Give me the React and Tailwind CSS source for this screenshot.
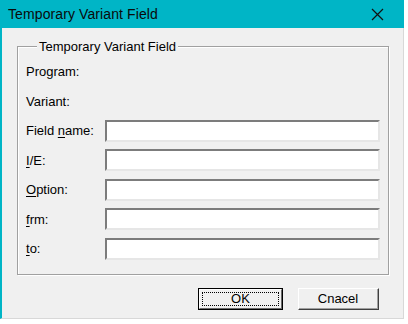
import React from "react";

const rows = [
  { pre: "Program:", input: false },
  { pre: "Variant:", input: false },
  { pre: "Field ", key: "n", post: "ame:", input: true },
  { pre: "", key: "I", post: "/E:", input: true },
  { pre: "", key: "O", post: "ption:", input: true },
  { pre: "", key: "f", post: "rm:", input: true },
  { pre: "", key: "t", post: "o:", input: true },
];

const Field = () => (
  <input
    type="text"
    className="h-[22px] w-[275px] bg-white border-2 border-t-[#7c7c7c] border-l-[#7c7c7c] border-b-[#e6e6e6] border-r-[#e6e6e6] outline-none"
  />
);

const App = () => {
  return (
    <div
      className="w-[408px] h-[324px] bg-white text-black text-[13px]"
      style={{ fontFamily: '"Liberation Sans", Arial, sans-serif' }}
    >
      <div className="w-[404px] h-[319px] flex flex-col border-l-2 border-[#00b5c6] border-r border-r-[#d8d8d8] border-b border-b-[#d8d8d8] bg-[#f0f0f0]">
        {/* title bar */}
        <div className="h-[28px] -ml-[2px] w-[404px] bg-[#00b5c6] flex items-center justify-between pl-[8px] pr-[20px]">
          <span className="text-[14px] leading-none tracking-[0.1px] text-[#0a0a0a]">Temporary Variant Field</span>
          <svg width="13" height="13" viewBox="0 0 13 13">
            <path d="M1 1 L12 12 M12 1 L1 12" stroke="#111" strokeWidth="1.2" fill="none" />
          </svg>
        </div>

        {/* group box */}
        <div className="mt-[18px] ml-[15px] w-[372px] border border-[#a0a0a0] shadow-[inset_1px_1px_0_#fff,1px_1px_0_#fff] pl-[8px] pr-[8px] pb-[10px]">
          <div className="-mt-[8px] ml-[11px] w-fit px-[2px] h-[15px] leading-[15px] bg-[#f0f0f0]">
            Temporary Variant Field
          </div>
          <div className="mt-[3px] flex flex-col">
            {rows.map((r, i) => (
              <div key={i} className="h-[29.5px] flex items-center">
                <div className="w-[79px] leading-[15px]">
                  {r.pre}
                  {r.key && <span className="underline underline-offset-2">{r.key}</span>}
                  {r.post}
                </div>
                {r.input && <Field />}
              </div>
            ))}
          </div>
        </div>

        {/* buttons */}
        <div className="mt-[13px] flex justify-end pr-[24px] gap-[15px]">
          <button className="w-[85px] h-[22px] border border-black bg-[#f0f0f0] p-0">
            <div className="h-full w-full border border-t-white border-l-white border-b-[#696969] border-r-[#696969] p-[2px]">
              <div className="h-full w-full border border-dotted border-black flex items-center justify-center leading-none">
                OK
              </div>
            </div>
          </button>
          <button className="w-[81px] h-[22px] bg-[#f0f0f0] border border-t-white border-l-white border-b-[#404040] border-r-[#404040] p-0">
            <div className="h-full w-full border-b border-r border-[#a0a0a0] flex items-center justify-center leading-none">
              Cnacel
            </div>
          </button>
        </div>
      </div>
    </div>
  );
};

export default App;
